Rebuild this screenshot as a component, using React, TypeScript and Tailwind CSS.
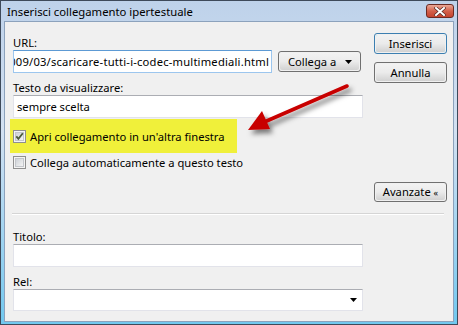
import React from "react";

// Vista-style "Inserisci collegamento ipertestuale" dialog

function TextBox({ value, w }: { value?: string; w: string }) {
  return (
    <div className={`${w} h-[23px] flex items-center overflow-hidden bg-white border border-[#e2e3ea] border-t-[#abadb3]`}>
      {value && <span className="pl-[3px] whitespace-nowrap text-black">{value}</span>}
    </div>
  );
}

function Button({
  children,
  w,
  h = "h-[21px]",
  primary,
  className = "",
}: {
  children: React.ReactNode;
  w: string;
  h?: string;
  primary?: boolean;
  className?: string;
}) {
  return (
    <div
      className={`${w} ${h} rounded-[3px] border ${
        primary ? "border-[#3c7fb1]" : "border-[#707070]"
      } p-px ${className}`}
    >
      <div
        className={`h-full w-full rounded-[2px] flex items-center justify-center ${
          primary ? "ring-1 ring-inset ring-[#48d8fb]/60" : ""
        }`}
      >
        <div className="h-full w-full flex items-center justify-center rounded-[2px] bg-gradient-to-b from-[#f2f2f2] via-[#ebebeb] via-50% to-[#d2d2d2]">
          {children}
        </div>
      </div>
    </div>
  );
}

function CheckBox({ checked }: { checked?: boolean }) {
  return (
    <svg width="13" height="13" viewBox="0 0 13 13" className="shrink-0">
      <defs>
        <linearGradient id="cbg" x1="0" y1="0" x2="1" y2="1">
          <stop offset="0" stopColor="#cbcfd5" />
          <stop offset="1" stopColor="#f6f6f6" />
        </linearGradient>
      </defs>
      <rect x="0.5" y="0.5" width="12" height="12" fill="#f4f4f4" stroke="#8f8f8f" />
      <rect x="2.5" y="2.5" width="8" height="8" fill="url(#cbg)" stroke="#c3c6cb" />
      {checked && (
        <path d="M3.3 6.3 L5.4 8.8 L9.8 3.3" fill="none" stroke="#4a5a3a" strokeWidth="1.8" />
      )}
    </svg>
  );
}

function Arrow() {
  return (
    <svg className="absolute left-0 top-0 pointer-events-none" width="458" height="325">
      <defs>
        <filter id="sh" x="-20%" y="-40%" width="140%" height="180%">
          <feDropShadow dx="3" dy="4" stdDeviation="2.4" floodColor="#000" floodOpacity="0.5" />
        </filter>
      </defs>
      <g filter="url(#sh)">
        <line x1="347" y1="86" x2="262" y2="123" stroke="#c80000" strokeWidth="3.6" strokeLinecap="round" />
        <polygon points="248,130 270,129 262,111" fill="#c80000" />
      </g>
    </svg>
  );
}

export default function App() {
  return (
    <div className="relative w-[458px] h-[325px] overflow-hidden font-['Noto_Sans',sans-serif] text-[11.2px] leading-[15px] text-black">
      <div className="h-full flex flex-col border border-[#3e4a5a] bg-gradient-to-b from-[#bed2ea] via-[#d3e1f2] via-40% to-[#70c8ef]">
        {/* title bar */}
        <div className="h-[20px] flex items-start justify-between pl-[6px] pr-[3px]">
          <span className="pt-[3px] text-[11.3px]">Inserisci collegamento ipertestuale</span>
          <div className="mt-[3px] w-[28px] h-[14px] rounded-[3px] border border-[#6b2a22] bg-gradient-to-b from-[#e9a897] via-[#d3604a] via-50% to-[#c5432e] flex items-center justify-center">
            <svg width="12" height="9" viewBox="0 0 12 9">
              <path d="M2 1 L10 8 M10 1 L2 8" stroke="#5a2a24" strokeWidth="3.4" strokeLinecap="square" />
              <path d="M2 1 L10 8 M10 1 L2 8" stroke="#ffffff" strokeWidth="2" strokeLinecap="square" />
            </svg>
          </div>
        </div>

        {/* client area */}
        <div className="flex-1 mx-[3px] mb-[2px] border border-[#8ca2bc] bg-[#f0f0f0] pl-[8px] pr-[6px] flex flex-col">
          <div className="flex gap-[11px]">
            {/* left column */}
            <div className="w-[350px] pt-[13px] flex flex-col">
              <span>URL:</span>
              <div className="flex items-center gap-[6px]">
                <div className="w-[259px] h-[23px] flex items-center justify-end overflow-hidden bg-white border border-[#9cc6ee] border-t-[#5d9ad4] pr-[2px]">
                  <span className="whitespace-nowrap shrink-0 tracking-[0.2px]">2009/03/scaricare-tutti-i-codec-multimediali.html</span>
                </div>
                <Button w="w-[83px]">
                  <div className="w-full flex items-center justify-between pl-[8px] pr-[7px]">
                    <span>Collega a</span>
                    <svg width="7" height="4" viewBox="0 0 7 4">
                      <path d="M0 0 H7 L3.5 4 Z" fill="#000" />
                    </svg>
                  </div>
                </Button>
              </div>
              <span className="mt-[7px]">Testo da visualizzare:</span>
              <TextBox w="w-[350px]" value="sempre scelta" />
              <div className="-ml-[3px] mt-px w-[227px] h-[34px] bg-[#f0f03a] flex items-center gap-[4px] pl-[3px]">
                <CheckBox checked />
                <span>Apri collegamento in un'altra finestra</span>
              </div>
              <div className="mt-[3px] h-[13px] flex items-center gap-[4px]">
                <CheckBox />
                <span>Collega automaticamente a questo testo</span>
              </div>
            </div>

            {/* right column */}
            <div className="w-[73px] pt-[11px] flex flex-col">
              <Button w="w-[73px]" primary>
                Inserisci
              </Button>
              <Button w="w-[73px]" className="mt-[8px]">
                Annulla
              </Button>
              <Button w="w-[73px]" h="h-[20px]" className="mt-[99px]">
                <span>
                  Avanzate <span className="text-[9px]">«</span>
                </span>
              </Button>
            </div>
          </div>

          <div className="mt-[11px] -ml-px mr-[3px] h-[2px] border-t border-[#d5d5d5] border-b border-b-white" />

          <div className="w-[350px] flex flex-col">
            <span className="mt-[14px]">Titolo:</span>
            <TextBox w="w-[350px]" />
            <span className="mt-[7px]">Rel:</span>
            <div className="w-[350px] h-[22px] bg-white border border-[#e2e3ea] border-t-[#abadb3] flex items-center justify-end pr-[5px]">
              <svg width="7" height="4" viewBox="0 0 7 4">
                <path d="M0 0 H7 L3.5 4 Z" fill="#000" />
              </svg>
            </div>
          </div>
        </div>
      </div>
      <Arrow />
    </div>
  );
}
